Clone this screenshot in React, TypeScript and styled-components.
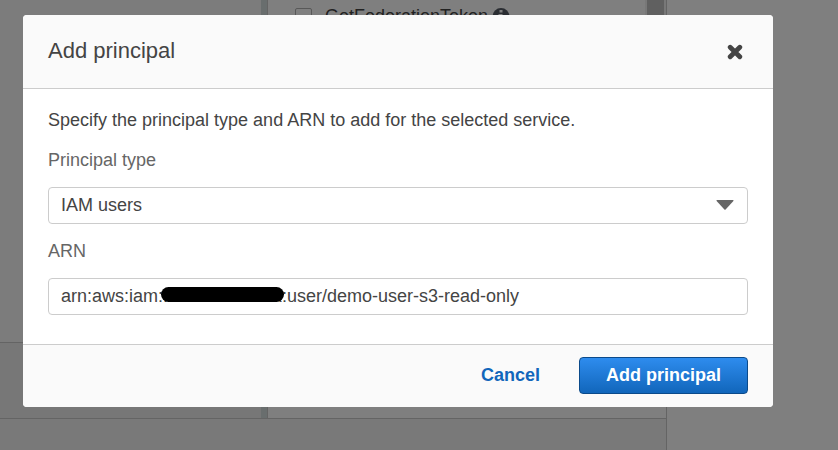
import React, { useState } from "react";
import styled, { createGlobalStyle } from "styled-components";

const GlobalStyle = createGlobalStyle`
  *, *::before, *::after { box-sizing: border-box; }
  html, body, #root { height: 100%; }
  body {
    margin: 0;
    overflow: hidden;
    font-family: "Liberation Sans", Arial, Helvetica, sans-serif;
    font-size: 18px;
    line-height: 24px;
    color: #444;
  }
  button, input, select { font: inherit; color: inherit; }
`;

const Page = styled.div`
  display: flex;
  height: 100%;
  background: #fff;
`;

const Editor = styled.main`
  display: flex;
  flex-direction: column;
  flex: 0 1 667px;
  min-width: 0;
  border-right: 1px solid #c8c8c8;
`;

const Panes = styled.div`
  display: flex;
  flex: 1;
  min-height: 0;
`;

const CodePane = styled.section`
  display: flex;
  flex-direction: column;
  flex: 0 0 261px;
  background: #f9f9f9;
`;

const CodeStatus = styled.div`
  height: 76px;
  margin-top: auto;
  border-top: 1px solid #c8c8c8;
  background: #efefef;
`;

const Splitter = styled.div`
  flex: 0 0 7px;
  background: #d2dcdc;
  border-right: 1px solid #c8c8c8;
`;

const ActionsPane = styled.section`
  flex: 1;
  min-width: 0;
  padding: 4px 27px;
  background: #fff;
`;

const ActionOption = styled.label`
  display: flex;
  align-items: center;
  gap: 13px;
`;

const ActionCheck = styled.input`
  appearance: none;
  width: 17px;
  height: 17px;
  margin: 0;
  border: 1px solid #b0b0b0;
  border-radius: 2px;
`;

const ActionName = styled.span`
  display: flex;
  align-items: center;
  gap: 4px;
`;

const ScrollTrack = styled.div`
  flex: 0 0 21px;
  margin-bottom: 24px;
  padding: 0 2px;
  background: #f0f0f0;
`;

const ScrollThumb = styled.div`
  height: 200px;
  background: #c0c0c0;
`;

const StatusBar = styled.footer`
  height: 32px;
  border-top: 1px solid #c8c8c8;
  background: #f2f2f2;
`;

const Overlay = styled.div`
  position: fixed;
  inset: 0;
  padding: 15px 65px 15px 23px;
  background: rgba(0, 0, 0, 0.5);
`;

const Modal = styled.form`
  overflow: hidden;
  border-radius: 4px;
  background: #fff;
`;

const ModalHeader = styled.header`
  display: flex;
  align-items: center;
  justify-content: space-between;
  padding: 21px 25px 22px;
  border-bottom: 1px solid #ccc;
  background: #fafafa;
`;

const Title = styled.h2`
  margin: 0;
  font-size: 22px;
  line-height: 30px;
  font-weight: 400;
`;

const CloseButton = styled.button`
  display: flex;
  padding: 6px 5px 4px;
  border: 0;
  background: none;
  cursor: pointer;
`;

const ModalBody = styled.div`
  padding: 19px 25px 29px;
`;

const Intro = styled.p`
  margin: 0 0 16px;
`;

const Field = styled.div`
  & + & { margin-top: 15px; }
`;

const FieldLabel = styled.label`
  display: block;
  margin-bottom: 15px;
  color: #666;
`;

const Control = styled.div`
  position: relative;
  display: flex;
`;

const SelectBox = styled.select`
  width: 100%;
  height: 37px;
  padding: 0 40px 2px 12px;
  appearance: none;
  border: 1px solid #ccc;
  border-radius: 4px;
  background: #fff;
`;

const TextBox = styled.input`
  width: 100%;
  height: 37px;
  padding: 0 12px;
  border: 1px solid #ccc;
  border-radius: 4px;
  background: #fff;
`;

const Caret = styled.svg`
  position: absolute;
  top: 13px;
  right: 14px;
  pointer-events: none;
`;

const Redaction = styled.span`
  position: absolute;
  top: 9px;
  left: 113px;
  width: 123px;
  height: 15px;
  border-radius: 8px;
  background: #000;
`;

const ModalFooter = styled.footer`
  display: flex;
  justify-content: flex-end;
  gap: 12px;
  padding: 12px 25px 13px;
  border-top: 1px solid #ccc;
  background: #fafafa;
`;

const Button = styled.button<{ $primary?: boolean }>`
  height: 37px;
  padding: 0 26px 2px;
  border: 1px solid ${(p) => (p.$primary ? "#0b4a8a" : "transparent")};
  border-radius: 4px;
  background: ${(p) => (p.$primary ? "linear-gradient(#2e8cee, #1166bb)" : "transparent")};
  color: ${(p) => (p.$primary ? "#fff" : "#1166bb")};
  font-weight: 700;
  white-space: nowrap;
  cursor: pointer;
`;

export default function App() {
  const [type, setType] = useState("IAM users");
  const [arn, setArn] = useState("arn:aws:iam::xxxxxx-xxxxxx:user/demo-user-s3-read-only");

  return (
    <>
      <GlobalStyle />
      <Page>
        <Editor>
          <Panes>
            <CodePane>
              <CodeStatus />
            </CodePane>
            <Splitter />
            <ActionsPane>
              <ActionOption>
                <ActionCheck type="checkbox" />
                <ActionName>
                  GetFederationToken
                  <svg width="18" height="18" viewBox="0 0 18 18" aria-hidden="true">
                    <circle cx="9" cy="9.500" r="8.500" fill="#545b64" />
                    <path d="M7.500 3h3v2.500h-3zM6.500 7h4v5.500h1V14h-5v-1.500h1v-4h-1z" fill="#fff" />
                  </svg>
                </ActionName>
              </ActionOption>
            </ActionsPane>
            <ScrollTrack>
              <ScrollThumb />
            </ScrollTrack>
          </Panes>
          <StatusBar />
        </Editor>
      </Page>
      <Overlay>
        <Modal role="dialog" aria-labelledby="dialog-title" onSubmit={(e) => e.preventDefault()}>
          <ModalHeader>
            <Title id="dialog-title">Add principal</Title>
            <CloseButton type="button" aria-label="Close">
              <svg width="16" height="16" viewBox="0 0 16 16" aria-hidden="true">
                <path d="M3.200 3.200L12.800 12.800M12.800 3.200L3.200 12.800" stroke="#444" strokeWidth="4.800" strokeLinecap="round" />
              </svg>
            </CloseButton>
          </ModalHeader>
          <ModalBody>
            <Intro>Specify the principal type and ARN to add for the selected service.</Intro>
            <Field>
              <FieldLabel htmlFor="principal-type">Principal type</FieldLabel>
              <Control>
                <SelectBox id="principal-type" value={type} onChange={(e) => setType(e.target.value)}>
                  <option>IAM users</option>
                </SelectBox>
                <Caret width="18" height="11" viewBox="0 0 18 11" aria-hidden="true">
                  <path d="M1 0h16q1 .3.400 1L9.600 9.500q-.6.500-1.200 0L.6 1Q0 .3 1 0z" fill="#666" />
                </Caret>
              </Control>
            </Field>
            <Field>
              <FieldLabel htmlFor="principal-arn">ARN</FieldLabel>
              <Control>
                <TextBox id="principal-arn" type="text" value={arn} onChange={(e) => setArn(e.target.value)} />
                <Redaction />
              </Control>
            </Field>
          </ModalBody>
          <ModalFooter>
            <Button type="button">Cancel</Button>
            <Button type="submit" $primary>Add principal</Button>
          </ModalFooter>
        </Modal>
      </Overlay>
    </>
  );
}
